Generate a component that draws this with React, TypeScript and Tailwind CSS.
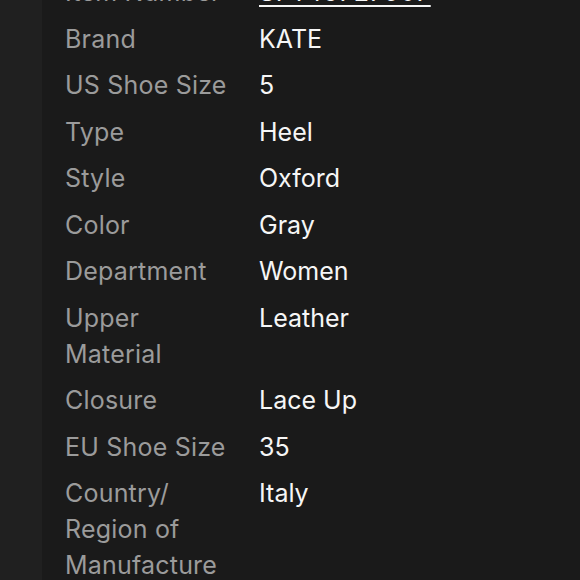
import React from "react";

const rows: [string, string, boolean?][] = [
  ["Item Number", "SFT46727907", true],
  ["Brand", "KATE"],
  ["US Shoe Size", "5"],
  ["Type", "Heel"],
  ["Style", "Oxford"],
  ["Color", "Gray"],
  ["Department", "Women"],
  ["Upper Material", "Leather"],
  ["Closure", "Lace Up"],
  ["EU Shoe Size", "35"],
  ["Country/ Region of Manufacture", "Italy"],
];

export default function App() {
  return (
    <div
      className="w-[580px] h-[580px] overflow-hidden flex bg-[#1a1a1a]"
      style={{ fontFamily: "Inter, 'Noto Sans', sans-serif" }}
    >
      <div className="w-[42px] shrink-0 bg-[#202020]" />
      <div className="flex-1 pl-[23px]">
        <div className="mt-[-26px] flex flex-col gap-[10.5px] text-[25px] leading-[36px]">
          {rows.map(([k, v, u]) => (
            <div key={k} className="flex">
              <div className="w-[194px] shrink-0 pr-[24px] text-[#9b9b9b] tracking-[0.2px]">{k}</div>
              <div className={u ? "text-[#f6f6f6] underline underline-offset-[4px] tracking-[0.6px]" : "text-[#f6f6f6]"}>{v}</div>
            </div>
          ))}
        </div>
      </div>
    </div>
  );
}
